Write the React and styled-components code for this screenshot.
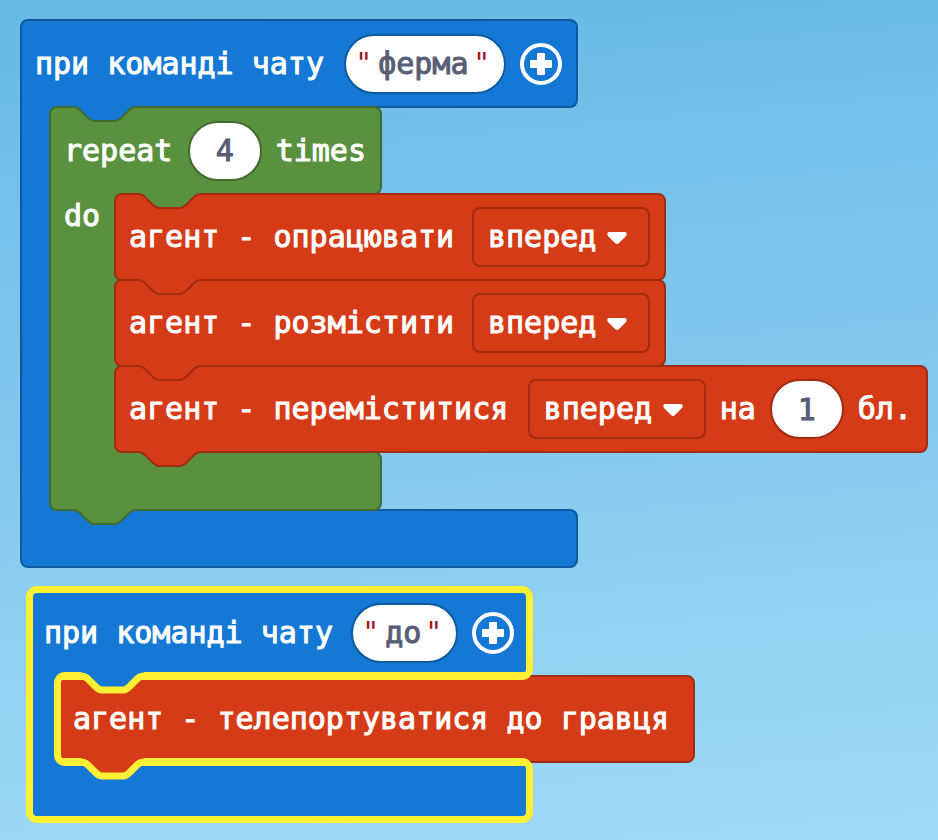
import React from "react";
import styled, { createGlobalStyle } from "styled-components";

const palette = {
  event: { fill: "#1478d4", line: "#0d5a9f" },
  loop: { fill: "#5a913f", line: "#426c2e" },
  agent: { fill: "#d63b18", line: "#a02c12" },
};
const highlight = "#fff033";
const font = '"DejaVu Sans Mono", "Liberation Mono", monospace';

const GlobalStyle = createGlobalStyle`
  *, *::before, *::after { box-sizing: border-box; }
  body { margin: 0; }
`;

const Workspace = styled.main`
  min-height: 100vh;
  padding: 19px 10px 17px 20px;
  background: linear-gradient(175deg, #68b9e6 0%, #84c9ed 50%, #a1daf7 100%);
  font: 30px/36px ${font};
  color: #fff;
  display: flex;
  flex-direction: column;
  align-items: flex-start;
  gap: 21px;
`;

const Container = styled.section`
  position: relative;
  width: ${(p) => p.$width}px;
  margin-left: ${(p) => p.$indent || 0}px;
`;

const Label = styled.span`
  white-space: pre;
  -webkit-text-stroke: 1px currentColor;
`;

const Row = styled.div`
  display: flex;
  align-items: center;
  gap: 14px;
  height: ${(p) => (p.$tall ? 89 : 88)}px;
  padding: 0 14px 0 13px;
  border: 2px solid ${(p) => palette[p.$kind].line};
  border-radius: 8px;
  background: ${(p) => palette[p.$kind].fill};

  & > ${Label}:first-of-type {
    margin-right: auto;
  }
`;

const Mouth = styled.div`
  position: relative;
  display: flex;
  align-items: flex-start;
  margin-top: -2px;

  &::before {
    content: "";
    position: absolute;
    inset: -8px auto -8px 0;
    width: ${(p) => p.$arm + 10}px;
    background: ${(p) => palette[p.$kind].fill};
    border-left: 2px solid ${(p) => palette[p.$kind].line};
  }
`;

const Arm = styled.div`
  position: relative;
  flex: none;
  width: ${(p) => p.$arm}px;
  padding: 5px 0 0 15px;
`;

const Stack = styled.div`
  position: relative;
  display: flex;
  flex-direction: column;
  align-items: flex-start;
`;

const Foot = styled.div`
  height: ${(p) => (p.$kind === "loop" ? 60 : 59)}px;
  margin-top: -2px;
  border: 2px solid ${(p) => palette[p.$kind].line};
  border-radius: 8px;
  background: ${(p) => palette[p.$kind].fill};
`;

const Statement = styled(Row)`
  position: relative;
  width: ${(p) => p.$width}px;

  & + & {
    margin-top: -2px;
  }
`;

const Pill = styled.label`
  display: flex;
  align-items: center;
  height: 60px;
  padding: 0 14px 0 9px;
  border: 2px solid ${(p) => palette[p.$kind].line};
  border-radius: 30px;
  background: #fff;
`;

const Quote = styled.span`
  color: #a31515;
  font-size: 28px;
  line-height: 36px;
`;

const TextField = styled.input`
  width: ${(p) => p.$width}px;
  margin-left: 6px;
  padding: 0;
  border: 0;
  outline: 0;
  background: transparent;
  color: #575e75;
  font: inherit;
  -webkit-text-stroke: 1px currentColor;
`;

const NumberField = styled.input`
  width: 74px;
  height: 60px;
  padding: 0;
  border: 2px solid ${(p) => palette[p.$kind].line};
  border-radius: 30px;
  background: #fff;
  color: #575e75;
  text-align: center;
  font: inherit;
  -webkit-text-stroke: 1px currentColor;
`;

const Dropdown = styled.span`
  position: relative;
  display: flex;
`;

const Select = styled.select`
  appearance: none;
  width: 178px;
  height: 60px;
  padding: 0 0 0 14px;
  border: 2px solid ${palette.agent.line};
  border-radius: 8px;
  background: transparent;
  color: #fff;
  font: inherit;
  -webkit-text-stroke: 1px currentColor;
`;

const Caret = styled.svg`
  position: absolute;
  right: 23px;
  top: 25px;
  pointer-events: none;
`;

const IconButton = styled.button`
  display: flex;
  padding: 0;
  border: 0;
  background: none;
  color: #fff;
`;

const Connector = styled.svg`
  position: absolute;
  left: ${(p) => p.$left}px;
  ${(p) => (p.$edge === "top" ? "top" : "bottom")}: ${(p) => p.$shift}px;
  overflow: visible;
  pointer-events: none;
`;

const OuterHighlight = styled.div`
  position: absolute;
  inset: ${(p) => (p.$part === "head" ? "-3px -3px auto" : "auto -3px -3px")};
  height: ${(p) => (p.$part === "head" ? 94 : 65)}px;
  border: 7px solid ${highlight};
  border-radius: 11px;
  pointer-events: none;
`;

const SideHighlight = styled.div`
  position: absolute;
  inset: 70px auto 40px -3px;
  width: 7px;
  background: ${highlight};
`;

const ArmPatch = styled.div`
  position: absolute;
  left: 4px;
  ${(p) => (p.$part === "head" ? "top: 70px" : "bottom: 41px")};
  width: 27px;
  height: 26px;
  background: ${palette.event.fill};
`;

const MouthHighlight = styled.div`
  position: absolute;
  inset: 83px 4px 54px 25px;
  border: 7px solid ${highlight};
  border-right: 0;
  border-radius: 11px 0 0 11px;
  pointer-events: none;
`;

const curve =
  "C3 1 5 2 7 4 L15 12 C17 14 19 15 21 15 H42 C44 15 46 14 48 12 L56 4 C58 2 60 1 63 1";

function Notch({ fill, line, thickness = 2, left = 22, edge = "top", shift = -2 }) {
  const top = thickness > 2 ? -3 : 0;
  return (
    <Connector $left={left} $edge={edge} $shift={shift} width="63" height="17" aria-hidden="true">
      <path d={`M0 ${top} V1 ${curve} V${top} Z`} fill={fill} />
      <path d={`M0 1 ${curve}`} fill="none" stroke={line} strokeWidth={thickness} />
    </Connector>
  );
}

function Tab({ kind }) {
  return (
    <Notch fill={palette[kind].fill} line={palette[kind].line} edge="bottom" shift={-17} />
  );
}

function Direction() {
  return (
    <Dropdown>
      <Select aria-label="Напрямок" defaultValue="вперед">
        <option>вперед</option>
        <option>назад</option>
      </Select>
      <Caret width="20" height="13" viewBox="0 0 20 13" aria-hidden="true">
        <path
          d="M2 0H18C20 0 20 3 19 4L12 11Q10 13 8 11L1 4C0 3 0 0 2 0Z"
          fill="#fff"
        />
      </Caret>
    </Dropdown>
  );
}

function ChatHeader({ command, fieldWidth, tall }) {
  return (
    <Row $kind="event" $tall={tall}>
      <Label>при команді чату</Label>
      <Pill $kind="event">
        <Quote>"</Quote>
        <TextField aria-label="Команда чату" defaultValue={command} $width={fieldWidth} />
        <Quote>"</Quote>
      </Pill>
      <IconButton type="button" aria-label="Додати параметр">
        <svg width="42" height="42" viewBox="0 0 42 42" aria-hidden="true">
          <circle cx="21" cy="21" r="19" fill="none" stroke="currentColor" strokeWidth="4" />
          <path
            d="M18 10h6q1 0 1 1v6h6q1 0 1 1v6q0 1-1 1h-6v6q0 1-1 1h-6q-1 0-1-1v-6h-6q-1 0-1-1v-6q0-1 1-1h6v-6q0-1 1-1z"
            fill="currentColor"
          />
        </svg>
      </IconButton>
    </Row>
  );
}

function AgentBlock({ width, above = "agent", last, children }) {
  return (
    <Statement $kind="agent" $width={width}>
      <Notch fill={palette[above].fill} line={palette.agent.line} />
      {children}
      {last && <Tab kind="agent" />}
    </Statement>
  );
}

function RepeatBlock() {
  return (
    <Container $width={333}>
      <Row $kind="loop" $tall>
        <Label>repeat</Label>
        <NumberField $kind="loop" aria-label="repeat times" defaultValue="4" />
        <Label>times</Label>
      </Row>
      <Mouth $kind="loop" $arm={65}>
        <Arm $arm={65}>
          <Label>do</Label>
        </Arm>
        <Stack>
          <AgentBlock width={552} above="loop">
            <Label>агент - опрацювати</Label>
            <Direction />
          </AgentBlock>
          <AgentBlock width={552}>
            <Label>агент - розмістити</Label>
            <Direction />
          </AgentBlock>
          <AgentBlock width={814} last>
            <Label>агент - переміститися</Label>
            <Direction />
            <Label>на</Label>
            <NumberField $kind="agent" aria-label="Кількість блоків" defaultValue="1" />
            <Label>бл.</Label>
          </AgentBlock>
        </Stack>
      </Mouth>
      <Foot $kind="loop" />
      <Notch fill={palette.event.fill} line={palette.loop.line} left={24} shift={0} />
      <Notch
        fill={palette.loop.fill}
        line={palette.loop.line}
        left={24}
        edge="bottom"
        shift={-15}
      />
    </Container>
  );
}

export default function App() {
  return (
    <>
      <GlobalStyle />
      <Workspace>
        <Container $width={558}>
          <ChatHeader command="ферма" fieldWidth={95} tall />
          <Mouth $kind="event" $arm={29}>
            <Arm $arm={29} />
            <Stack>
              <RepeatBlock />
            </Stack>
          </Mouth>
          <Foot $kind="event" />
        </Container>

        <Container $width={501} $indent={9}>
          <ChatHeader command="до" fieldWidth={40} />
          <Mouth $kind="event" $arm={29}>
            <Arm $arm={29} />
            <Stack>
              <AgentBlock width={637} above="event" last>
                <Label>агент - телепортуватися до гравця</Label>
              </AgentBlock>
            </Stack>
          </Mouth>
          <Foot $kind="event" />
          <OuterHighlight $part="head" />
          <OuterHighlight $part="foot" />
          <ArmPatch $part="head" />
          <ArmPatch $part="foot" />
          <SideHighlight />
          <MouthHighlight />
          <Notch
            fill={palette.event.fill}
            line={highlight}
            thickness={7}
            left={52}
            shift={86}
          />
          <Notch
            fill={palette.agent.fill}
            line={highlight}
            thickness={7}
            left={52}
            edge="bottom"
            shift={42}
          />
        </Container>
      </Workspace>
    </>
  );
}
